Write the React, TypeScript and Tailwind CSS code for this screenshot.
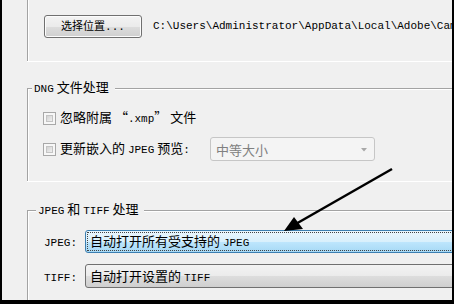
import React from "react";

function M({ children }: { children: React.ReactNode }) {
  return <span className="font-['Liberation_Mono',monospace] text-[11px]">{children}</span>;
}

function CheckBox() {
  return (
    <div className="w-[13px] h-[13px] shrink-0 border border-[#a8a8a8] bg-[#f7f7f7] p-[2px]">
      <div className="w-full h-full border border-[#c4c4c4] bg-[linear-gradient(135deg,#d2d2d2,#f0f0f0)]" />
    </div>
  );
}

function Group({
  title,
  lead,
  pad,
  className,
  bodyClass,
  children,
}: {
  title: React.ReactNode;
  lead: string;
  pad: string;
  className: string;
  bodyClass: string;
  children: React.ReactNode;
}) {
  return (
    <div className={"ml-[25px] flex flex-col shrink-0 " + className}>
      <div className="flex h-[16px] items-center">
        <div className={"self-end h-[8px] shrink-0 border-t border-l border-[#a3a3a3] shadow-[inset_1px_1px_0_#ffffff] " + lead} />
        <div className={"leading-[16px] whitespace-nowrap shrink-0 " + pad}>{title}</div>
        <div className="self-end h-[8px] flex-1 border-t border-[#a3a3a3] shadow-[inset_0_1px_0_#ffffff]" />
      </div>
      <div className={"border-l border-[#a3a3a3] shadow-[inset_1px_0_0_#ffffff] flex flex-col " + bodyClass}>{children}</div>
    </div>
  );
}

export default function App() {
  return (
    <div className="relative w-[454px] h-[304px] bg-black pl-[2px] pr-[2px] pb-[4px] overflow-hidden">
      <div className="h-full bg-[#f0f0f0] flex flex-col overflow-hidden font-['Noto_Sans_CJK_SC','Liberation_Sans',sans-serif] text-[13px] text-black">
        {/* top (end of previous group) */}
        <div className="ml-[25px] h-[61px] shrink-0 border-l border-[#a3a3a3] shadow-[inset_1px_0_0_#ffffff] pl-[16px] pt-[15px] flex items-start">
          <div className="w-[98px] h-[23px] shrink-0 flex items-center justify-center border border-[#707070] rounded-[3px] bg-[linear-gradient(to_bottom,#f3f3f3_0%,#ebebeb_50%,#dddddd_51%,#cfcfcf_100%)] text-[11px] leading-none shadow-[inset_0_0_0_1px_#fcfcfc]">
            <span>
              选择位置<M>...</M>
            </span>
          </div>
          <span className="ml-[11px] leading-[23px] whitespace-nowrap font-['Liberation_Mono',monospace] text-[11px]">
            {"C:\\Users\\Administrator\\AppData\\Local\\Adobe\\CameraRaw\\Cache\\"}
          </span>
        </div>
        <div className="ml-[25px] h-px shrink-0 bg-white" />

        {/* DNG group */}
        <Group
          title={<><M>DNG</M> 文件处理</>}
          lead="w-[5px]"
          pad="pl-[2px] pr-[6px]"
          className="mt-[18px]"
          bodyClass="pt-[12px] pl-[15px] pb-[20px]"
        >
          <div className="h-[20px] flex items-center">
            <CheckBox />
            <span className="ml-[4px] whitespace-nowrap leading-[20px]">
              忽略附属 “<M>.xmp</M>” 文件
            </span>
          </div>
          <div className="mt-[9px] h-[24px] flex items-center">
            <CheckBox />
            <span className="ml-[4px] w-[150px] shrink-0 whitespace-nowrap leading-[20px]">
              更新嵌入的 <M>JPEG</M> 预览<M>:</M>
            </span>
            <div className="relative w-[165px] h-[24px] shrink-0 flex items-center border border-[#c6c6c6] rounded-[3px] bg-[#f4f4f4] pl-[5px] text-[#808080] leading-none">
              <span>中等大小</span>
              <svg className="absolute right-[7px] top-[10px]" width="6" height="4" viewBox="0 0 6 4">
                <path d="M0 0 L6 0 L3 3.5 Z" fill="#a8a8a8" />
              </svg>
            </div>
          </div>
        </Group>
        <div className="ml-[25px] h-px shrink-0 bg-white" />

        {/* JPEG & TIFF group */}
        <Group
          title={<><M>JPEG</M> 和 <M>TIFF</M> 处理</>}
          lead="w-[9px]"
          pad="pl-[2px] pr-[5px]"
          className="mt-[20px] flex-1"
          bodyClass="flex-1 pt-[12px] pl-[16px]"
        >
          <div className="h-[23px] flex items-center">
            <span className="w-[41px] shrink-0"><M>JPEG:</M></span>
            <div className="w-[400px] h-[23px] shrink-0 border border-[#3c7fb1] rounded-l-[3px] bg-[linear-gradient(to_bottom,#eaf6fd_0%,#d9f0fc_50%,#bee6fd_51%,#a7d9f5_100%)] p-[1px]">
              <div className="h-full border border-dotted border-[#444] flex items-center pl-[2px] leading-none whitespace-nowrap">
                <span>
                  自动打开所有受支持的 <M>JPEG</M>
                </span>
              </div>
            </div>
          </div>
          <div className="mt-[11px] h-[24px] flex items-center">
            <span className="w-[41px] shrink-0"><M>TIFF:</M></span>
            <div className="w-[400px] h-[24px] shrink-0 border border-[#707070] rounded-l-[3px] bg-[linear-gradient(to_bottom,#f3f3f3_0%,#ebebeb_50%,#dddddd_51%,#cfcfcf_100%)] flex items-center pl-[4px] leading-none whitespace-nowrap">
              <span>
                自动打开设置的 <M>TIFF</M>
              </span>
            </div>
          </div>
        </Group>
      </div>

      {/* annotation arrow */}
      <svg className="absolute left-0 top-0 pointer-events-none" width="454" height="304" viewBox="0 0 454 304">
        <line x1="392" y1="169" x2="294" y2="225" stroke="#000" strokeWidth="2.5" />
        <polygon points="284,231 294,217 303,229" fill="#000" />
      </svg>
    </div>
  );
}
